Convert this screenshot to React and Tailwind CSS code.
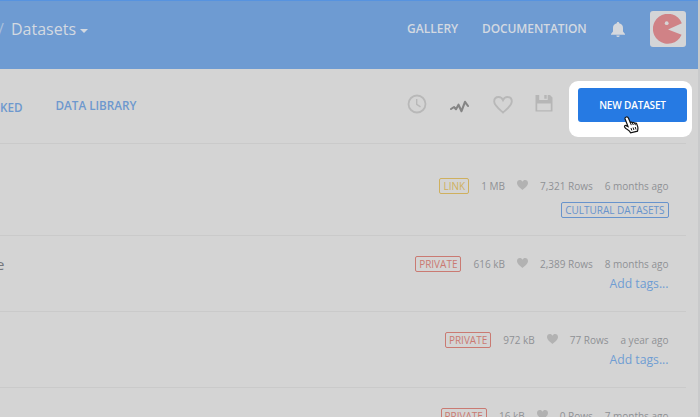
const rows = [
  { title: '', tag: 'LINK', size: '1 MB', count: '7,321 Rows', age: '6 months ago', category: 'CULTURAL DATASETS' },
  { title: 'e', tag: 'PRIVATE', size: '616 kB', count: '2,389 Rows', age: '8 months ago' },
  { title: '', tag: 'PRIVATE', size: '972 kB', count: '77 Rows', age: 'a year ago' },
  { title: '', tag: 'PRIVATE', size: '16 kB', count: '0 Rows', age: '7 months ago' },
];

function Header() {
  return (
    <header className="flex h-[69px] shrink-0 items-start border-t border-[#5793df] bg-[#6e9bd2] text-[#d3d9e1]">
      <div className="flex h-14 items-center text-[16px] leading-none">
        <span className="w-[11px] text-[#a9bfdb]"><span className="-ml-[2px]">/</span></span>
        <span>Datasets</span>
        <svg className="mt-[3px] ml-[4px]" width="8" height="4" viewBox="0 0 8 4"><path d="M0 0h8L4 4z" fill="currentColor" /></svg>
      </div>
      <nav className="ml-auto flex h-14 items-center text-[12px] font-semibold leading-none">
        <span className="w-[75px]">GALLERY</span>
        <span className="w-[129px] tracking-[-0.1px]">DOCUMENTATION</span>
        <svg width="14" height="16" viewBox="0 0 14 16" fill="#d5d8dd" className="mt-0.5">
          <path d="M7 0c.8 0 1.200.5 1.200 1.200C10.900 1.800 12 3.600 12 6v3.500L14 12v.8H0V12l2-2.500V6c0-2.400 1.100-4.200 3.800-4.800C5.800.5 6.200 0 7 0z" />
          <path d="M5.300 13.500h3.400a1.700 1.600 0 0 1-3.400 0z" />
        </svg>
        <div className="mr-3 ml-[25px] flex size-9 items-center justify-center rounded-[3px] bg-[#d4d5d7]">
          <svg width="30" height="30" viewBox="0 0 30 30">
            <path d="M15 15.600 28.800 9.200A15 15 0 1 0 28.600 20.800z" fill="#d08286" />
            <circle cx="13.700" cy="9.200" r="1.900" fill="#d7d5d6" />
          </svg>
        </div>
      </nav>
    </header>
  );
}

function Toolbar() {
  return (
    <div className="mr-3 flex h-[75px] shrink-0 items-start border-b border-[#cacaca] text-[11.700px] font-semibold leading-4 text-[#6d98ce]">
      <span className="mt-[30px] w-[55.500px]">KED</span>
      <span className="mt-[28px]">DATA LIBRARY</span>
      <div className="mt-6 ml-auto flex h-[22px] items-center">
        <svg width="20" height="20" viewBox="0 0 20 20" fill="none" stroke="#b8b8b8" strokeWidth="1.800">
          <circle cx="10" cy="10" r="8.500" /><path d="M9.700 5v5.300l3.800 2.500" strokeWidth="1.400" />
        </svg>
        <svg className="mt-1 ml-[23px]" width="19" height="13" viewBox="0 0 19 13" fill="none" stroke="#858585" strokeWidth="2.100" strokeLinejoin="round" strokeLinecap="round">
          <path d="M1 9 4 7l2 2.200 2.500-4.500 3 6.500L15 1.800 18 6" />
        </svg>
        <svg className="mt-[2px] ml-[24px]" width="20" height="18" viewBox="0 0 20 18" fill="none" stroke="#b8b8b8" strokeWidth="1.900">
          <path d="M10 16.500C6 13 1.200 9.500 1.200 5.600 1.200 2.800 3 1 5.500 1 7.500 1 9.200 2.200 10 4c.8-1.800 2.500-3 4.500-3 2.500 0 4.300 1.800 4.300 4.600 0 3.900-4.800 7.400-8.800 10.900z" />
        </svg>
        <svg className="mb-[3px] ml-[22px]" width="18" height="18" viewBox="0 0 18 18">
          <path fillRule="evenodd" fill="#b6b6b6" d="M.5 1h3.700v5h8.500V1H15l2.500 2.500V17.500H.5zM2.200 9.500v6.800h13.600V9.500zM9.300 1h2.400v3.800H9.300z" />
        </svg>
        <div className="w-[133px]" />
      </div>
    </div>
  );
}

function Heart() {
  return (
    <svg width="11" height="10" viewBox="0 0 11 10" className="mb-[3px] ml-3 shrink-0">
      <path fill="#b2b2b2" d="M5.500 10C3.500 8 0 6 0 3 0 1.200 1.200 0 2.800 0c1.200 0 2.200.6 2.700 1.700C6 .6 7 0 8.200 0 9.800 0 11 1.200 11 3c0 3-3.500 5-5.500 7z" />
    </svg>
  );
}

function Row({ row, first }) {
  const tagColor = row.tag === 'LINK' ? 'border-[#cfb05e] text-[#cfb05e]' : 'border-[#ca7a72] text-[#ca7a72]';
  return (
    <div className={`mr-3 flex shrink-0 border-b border-[#cacaca] ${first ? 'h-[92px] pt-[34px]' : 'h-[76px] pt-5'}`}>
      <span className="-mt-px -ml-1 text-[15px] leading-[18px] text-[#74777c]">{row.title}</span>
      <div className="mr-[17.500px] ml-auto flex flex-col items-end">
        <div className="flex h-4 items-center whitespace-nowrap text-[10px] leading-none text-[#8f9194]">
          <span className={`flex h-4 items-center rounded-[2px] border px-[3px] text-[10px] font-medium ${tagColor}`}>{row.tag}</span>
          <span className="ml-3">{row.size}</span>
          <Heart />
          <span className="ml-3">{row.count}</span>
          <span className="ml-3">{row.age}</span>
        </div>
        {row.category ? (
          <span className="mt-2 flex h-4 items-center rounded-[2px] border border-[#6793cc] px-[3px] text-[10px] font-medium leading-none text-[#6793cc]">{row.category}</span>
        ) : (
          <span className="mt-[3px] text-[12.200px] leading-[18px] text-[#6f9dd3]">Add tags...</span>
        )}
      </div>
    </div>
  );
}

function Pointer() {
  return (
    <svg className="absolute top-[35px] left-[54px]" width="17" height="18" viewBox="0 0 17 18">
      <path d="M3.200 1C4.300.6 5.100 1.200 5.500 2.200L7.300 6.500C8 5.800 9 6 9.400 6.800c.8-.6 1.900-.4 2.300.4.900-.4 1.800 0 2.100.9l.9 2.500c.5 1.800.2 3.100-.2 4.600l-6.800 1.700c-.7-1.700-1.700-2.400-3.300-3.300-1.200-.7-2.400-1.800-2.800-2.700-.4-1 .6-1.700 1.600-1.300L5 10.500 2.100 3C1.800 2 2.300 1.300 3.200 1z" fill="#fff" stroke="#111" strokeWidth="1.200" />
      <path d="m7.300 6.500 1 2.600m1.100-2.300.9 2.200m1.400-1.800.8 2M8 12l.8 2.500m1.300-3 .8 2.500m1.300-3 .8 2.500" fill="none" stroke="#111" strokeWidth="1" />
    </svg>
  );
}

export default function App() {
  return (
    <div className="relative h-[417px] w-[700px] overflow-hidden bg-[#d4d4d4] font-['Open_Sans','Noto_Sans',sans-serif]">
      <div className="flex h-full w-[700px] flex-col border-r-2 border-[#c9cacb]">
        <Header />
        <Toolbar />
        {rows.map((row, i) => <Row key={i} row={row} first={i === 0} />)}
      </div>
      <div className="absolute top-[81px] left-[569px] h-14 w-[123px] rounded-[9px] bg-white">
        <button className="mt-[7px] ml-[9px] flex h-[34px] w-[109px] items-center justify-center rounded-[3px] bg-[#267ae3] text-[10px] font-semibold leading-none tracking-[-0.15px] text-white">NEW DATASET</button>
        <Pointer />
      </div>
    </div>
  );
}
